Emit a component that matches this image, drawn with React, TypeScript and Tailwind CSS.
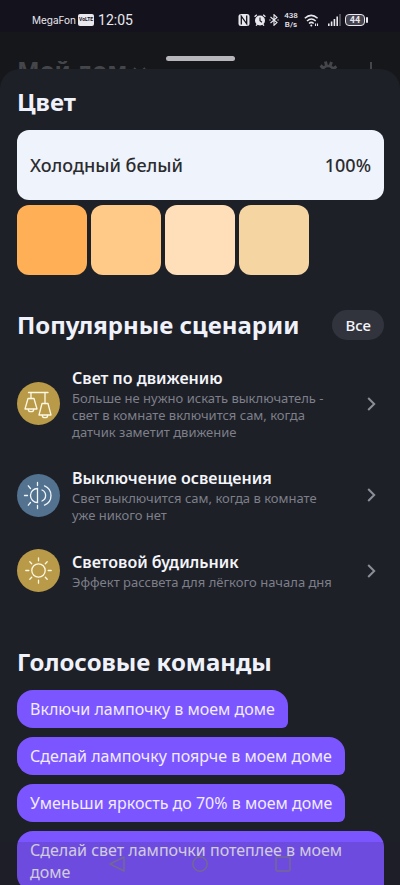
import type { ReactNode } from "react";

const swatches = [
  { name: "Тёплый белый", color: "bg-[#ffaf56]" },
  { name: "Мягкий белый", color: "bg-[#ffc987]" },
  { name: "Белый", color: "bg-[#ffdfb9]" },
  { name: "Дневной белый", color: "bg-[#f5d5a2]" },
];

function LampsIcon() {
  return (
    <svg viewBox="0 0 43 43" className="size-full" fill="none" stroke="#fff8e4" strokeWidth="1.3" strokeLinejoin="round" strokeLinecap="round" aria-hidden="true">
      <path d="M11.5 10.5H31M14 10.5V16.5M28 10.5V21.5" />
      <path d="M11 16.5H17L20 27H8Z" />
      <path d="M11.3 27.5a2.7 2.2 0 0 0 5.4 0" />
      <path d="M25 21.5H31L34 33H22Z" />
      <path d="M25.3 33.5a2.7 2.2 0 0 0 5.4 0" />
    </svg>
  );
}

function LightOffIcon() {
  return (
    <svg viewBox="0 0 43 43" className="size-full" fill="none" stroke="#f1f6fb" strokeWidth="1.3" strokeLinecap="round" aria-hidden="true">
      <path d="M20.5 14.5V28.5A7 7 0 0 1 20.5 14.5Z" />
      <path d="M20.5 8.5V11.5M20.5 31.5V34.5M7.5 21.5H10.5M11.3 11.8L13.5 14.5M11.3 31.2L13.5 28.5" />
      <path d="M25 16A6 6 0 0 1 25 27" />
      <path d="M27.5 11.8A10.5 10.5 0 0 1 27.5 31.2" />
    </svg>
  );
}

function SunIcon() {
  return (
    <svg viewBox="0 0 43 43" className="size-full" fill="none" stroke="#fff8e4" strokeWidth="1.3" strokeLinecap="round" aria-hidden="true">
      <circle cx="21.5" cy="21.5" r="6.7" />
      <path d="M21.5 8.8V11.8M21.5 31.2V34.2M8.8 21.5H11.8M31.2 21.5H34.2M12.8 12.8L14.7 14.7M28.3 28.3L30.2 30.2M12.8 30.2L14.7 28.3M28.3 14.7L30.2 12.8" />
    </svg>
  );
}

type Scenario = { title: string; text: string; tint: string; icon: ReactNode };

const scenarios: Scenario[] = [
  {
    title: "Свет по движению",
    text: "Больше не нужно искать выключатель - свет в комнате включится сам, когда датчик заметит движение",
    tint: "bg-[#b99a48]",
    icon: <LampsIcon />,
  },
  {
    title: "Выключение освещения",
    text: "Свет выключится сам, когда в комнате уже никого нет",
    tint: "bg-[#527290]",
    icon: <LightOffIcon />,
  },
  {
    title: "Световой будильник",
    text: "Эффект рассвета для лёгкого начала дня",
    tint: "bg-[#b99a48]",
    icon: <SunIcon />,
  },
];

const commands = [
  "Включи лампочку в моем доме",
  "Сделай лампочку поярче в моем доме",
  "Уменьши яркость до 70% в моем доме",
  "Сделай свет лампочки потеплее в моем доме",
];

function StatusBar() {
  return (
    <div className="flex h-8 shrink-0 items-center justify-between bg-[#14121d] pt-2 pr-8 pl-8 font-['Roboto',sans-serif] text-[#e9e8ee]">
      <div className="flex items-center">
        <span className="font-['Inter',sans-serif] text-[10px]">MegaFon</span>
        <span className="ml-[2px] flex h-3 w-4 items-center justify-center rounded-xs bg-[#e9e8ee] text-[5px] font-bold text-[#14121d]">VoLTE</span>
        <span className="ml-1 text-sm">12:05</span>
      </div>
      <div className="flex items-center">
        <svg className="h-3 w-3" viewBox="0 0 12 12" aria-hidden="true">
          <rect x="0.5" y="0" width="11" height="12" rx="2.5" fill="#e9e8ee" />
          <path d="M3.3 10.5V2.2L8.7 9.8V1.5" fill="none" stroke="#14121d" strokeWidth="1.3" />
        </svg>
        <svg className="ml-1 h-3 w-3" viewBox="0 0 12 12" aria-hidden="true">
          <circle cx="6" cy="6.5" r="5" fill="#e9e8ee" />
          <path d="M0.6 2.8L2.8 0.7M11.4 2.8L9.2 0.7M2 11.6L3.5 10M10 11.6L8.5 10" stroke="#e9e8ee" strokeWidth="1.3" />
          <path d="M6 3.5V6.7L8 8.3" fill="none" stroke="#14121d" strokeWidth="1.1" />
        </svg>
        <svg className="ml-[3px] h-3 w-[10px]" viewBox="0 0 10 12" fill="none" stroke="#e9e8ee" strokeWidth="1.1" aria-hidden="true">
          <path d="M1.5 3L8 8.5L5 11.3V0.7L8 3.5L1.5 9" />
          <path d="M0.3 6H1.6M8.4 6H9.7" />
        </svg>
        <span className="ml-1 flex w-4 flex-col text-center text-[8px] leading-[9px] font-medium">
          <span>438</span>
          <span>B/s</span>
        </span>
        <svg className="ml-[5px] h-[13px] w-4" viewBox="0 0 16 13" fill="none" stroke="#e9e8ee" strokeWidth="1.5" aria-hidden="true">
          <path d="M0.8 4.3Q7.2 -1.5 13.6 4.3M3 7Q7.3 3 11.7 7M5 9.5Q7.3 7.3 9.7 9.5" />
          <circle cx="7.3" cy="11.5" r="1" fill="#e9e8ee" stroke="none" />
          <path d="M11.5 9.5V12M13.5 9.5V12" strokeWidth="1.1" />
        </svg>
        <svg className="ml-2 h-3 w-[13px]" viewBox="0 0 13 12" fill="#e9e8ee" aria-hidden="true">
          <rect x="0" y="9.5" width="1.6" height="2.5" />
          <rect x="2.8" y="7.5" width="1.6" height="4.5" />
          <rect x="5.6" y="5" width="1.6" height="7" />
          <rect x="8.4" y="2.5" width="1.6" height="9.5" />
          <rect x="11.2" y="0" width="1.6" height="12" opacity="0.35" />
        </svg>
        <span className="ml-1 flex h-3 w-5 items-center justify-center rounded-sm border border-[#e9e8ee] bg-[#45434d] text-[9px] leading-[10px] font-bold">44</span>
        <span className="ml-px h-[6px] w-[2px] rounded-full bg-[#e9e8ee]" />
      </div>
    </div>
  );
}

function PageBehind() {
  return (
    <div className="relative flex h-[60px] shrink-0 items-start justify-between overflow-hidden pt-6 pr-[18px] pl-[17px] text-[#45464b]">
      <div className="absolute inset-x-0 top-6 mx-auto h-[5px] w-[69px] rounded-full bg-[#b7b7bb]" />
      <div className="flex items-center gap-1">
        <span className="text-2xl leading-7 font-bold">Мой дом</span>
        <svg className="h-4 w-5" viewBox="0 0 20 16" fill="none" stroke="currentColor" strokeWidth="2" aria-hidden="true">
          <path d="M3 6L8.5 11.5L14 6" />
        </svg>
      </div>
      <div className="flex items-start gap-5 pt-1">
        <svg className="size-6" viewBox="0 0 24 24" fill="none" stroke="currentColor" aria-hidden="true">
          <circle cx="10" cy="12" r="6" strokeWidth="2.5" />
          <path d="M7.5 1.5L8.5 6M13.5 2L12 6M2.5 5.5L6 8.5M18.5 6.5L14.5 9M1 13H4M16 13H19" strokeWidth="3" />
        </svg>
        <svg className="h-6 w-5" viewBox="0 0 20 24" fill="none" stroke="currentColor" strokeWidth="2" aria-hidden="true">
          <path d="M9 2V22M0 12H18" />
        </svg>
      </div>
    </div>
  );
}

function ScenarioRow({ title, text, tint, icon }: Scenario) {
  return (
    <li>
      <button type="button" className="flex w-full items-center text-left">
        <span className={`size-[43px] shrink-0 rounded-full ${tint}`}>{icon}</span>
        <span className="ml-3 min-w-0 flex-1">
          <span className="block text-base leading-6 font-semibold text-[#f4f5fa]">{title}</span>
          <span className="block max-w-[270px] text-[13px] leading-[17px] text-[#7d7f89]">{text}</span>
        </span>
        <svg className="mr-2 h-[14px] w-[9px] shrink-0" viewBox="0 0 9 14" fill="none" stroke="#8c8e97" strokeWidth="2" aria-hidden="true">
          <path d="M1.2 1L7.2 7L1.2 13" />
        </svg>
      </button>
    </li>
  );
}

function NavigationBar() {
  return (
    <nav aria-label="Системная навигация" className="fixed inset-x-0 bottom-0 flex h-[43px] items-center justify-center gap-[67px] bg-[#1c1624]/15 text-[#77717e]/80">
      <button type="button" aria-label="Назад">
        <svg className="size-4" viewBox="0 0 16 16" fill="none" stroke="currentColor" strokeWidth="1.5" strokeLinejoin="round">
          <path d="M15 1V15L1 8Z" />
        </svg>
      </button>
      <button type="button" aria-label="Домой">
        <svg className="size-4" viewBox="0 0 16 16" fill="none" stroke="currentColor" strokeWidth="1.5">
          <circle cx="8" cy="8" r="7.2" />
        </svg>
      </button>
      <button type="button" aria-label="Недавние">
        <svg className="size-4" viewBox="0 0 16 16" fill="none" stroke="currentColor" strokeWidth="1.5">
          <rect x="1" y="1" width="14" height="14" rx="1" />
        </svg>
      </button>
    </nav>
  );
}

export default function App() {
  return (
    <div className="flex h-screen flex-col overflow-hidden bg-[#16171a] font-['Noto_Sans',sans-serif]">
      <StatusBar />
      <PageBehind />
      <main className="relative -mt-[23px] min-h-0 flex-1 overflow-hidden rounded-t-[20px] bg-[#1e2028] pt-[15px] pr-4 pl-[17px]">
        <section>
          <h2 className="text-2xl leading-9 font-bold text-[#eff2fb]">Цвет</h2>
          <button type="button" className="mt-[10px] flex h-[70px] w-full items-center justify-between rounded-xl bg-[#eff3fb] px-[13px] text-lg font-medium text-[#2b2c30]">
            <span>Холодный белый</span>
            <span>100%</span>
          </button>
          <div className="mt-[5px] flex gap-1">
            {swatches.map((s) => (
              <button key={s.name} type="button" aria-label={s.name} className={`size-[70px] rounded-xl ${s.color}`} />
            ))}
          </div>
        </section>

        <section className="mt-8">
          <div className="flex items-center justify-between">
            <h2 className="text-2xl leading-9 font-bold text-[#eff2fb]">Популярные сценарии</h2>
            <button type="button" className="h-[30px] rounded-full bg-[#32343d] px-[13px] text-[15px] font-medium text-[#f4f5fa]">
              Все
            </button>
          </div>
          <ul className="mt-[23px] flex flex-col gap-[25px]">
            {scenarios.map((s) => (
              <ScenarioRow key={s.title} {...s} />
            ))}
          </ul>
        </section>

        <section className="mt-[52px]">
          <h2 className="text-2xl leading-9 font-bold text-[#eff2fb]">Голосовые команды</h2>
          <ul className="mt-[10px] flex flex-col items-start gap-[9px]">
            {commands.map((c) => (
              <li key={c} className="rounded-2xl rounded-br-md bg-[#7b55ff] px-[13px] py-2 text-base leading-[22px] text-[#f1ecff]">
                {c}
              </li>
            ))}
          </ul>
        </section>
      </main>
      <NavigationBar />
    </div>
  );
}
